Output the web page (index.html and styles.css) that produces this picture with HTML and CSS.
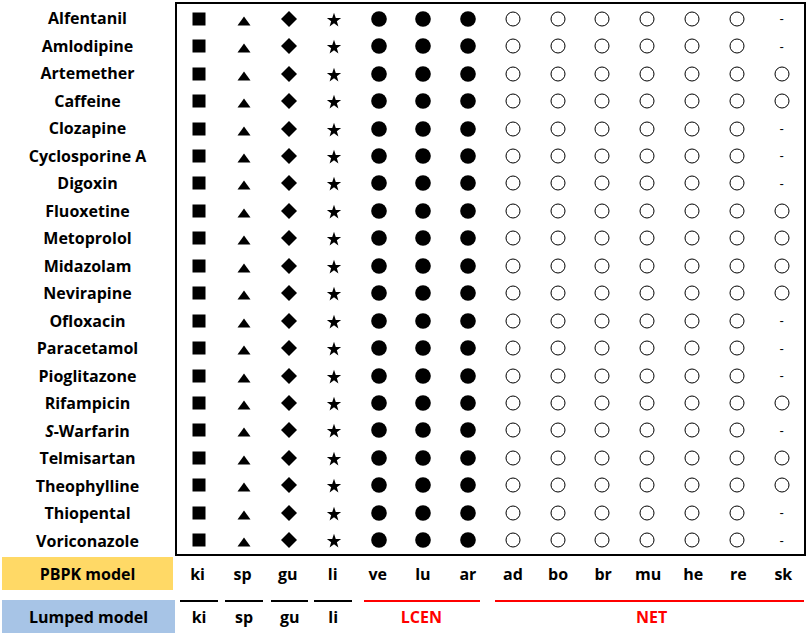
FILE: index.html
```html
<!DOCTYPE html>
<html lang="en">
<head>
    <meta charset="UTF-8">
    <meta name="viewport" content="width=device-width, initial-scale=1.0">
    <link rel="stylesheet" href="styles.css">

    <title>PBPK vs Lumped model</title>
</head>
<body>
    <div class="figure">
        <div class="chart">
            <div class="names" id="names"></div>
            <div class="box" id="box"></div>
        </div>

        <div class="legend pbpk">
            <div class="tag yellow">PBPK model</div>
            <div class="lbl">ki</div>
            <div class="lbl">sp</div>
            <div class="lbl">gu</div>
            <div class="lbl">li</div>
            <div class="lbl">ve</div>
            <div class="lbl">lu</div>
            <div class="lbl">ar</div>
            <div class="lbl">ad</div>
            <div class="lbl">bo</div>
            <div class="lbl">br</div>
            <div class="lbl">mu</div>
            <div class="lbl">he</div>
            <div class="lbl">re</div>
            <div class="lbl">sk</div>
        </div>

        <div class="legend lumped">
            <div class="tag blue">Lumped model</div>
            <div class="group g-ki">ki</div>
            <div class="group g-sp">sp</div>
            <div class="group g-gu">gu</div>
            <div class="group g-li">li</div>
            <div class="group red g-lcen">LCEN</div>
            <div class="group red g-net">NET</div>
        </div>
    </div>

    <script>
        const drugs = [
            ['Alfentanil', 0], ['Amlodipine', 0], ['Artemether', 1], ['Caffeine', 1],
            ['Clozapine', 0], ['Cyclosporine A', 0], ['Digoxin', 0], ['Fluoxetine', 1],
            ['Metoprolol', 1], ['Midazolam', 1], ['Nevirapine', 1], ['Ofloxacin', 0],
            ['Paracetamol', 0], ['Pioglitazone', 0], ['Rifampicin', 1], ['<i>S</i>-Warfarin', 0],
            ['Telmisartan', 1], ['Theophylline', 1], ['Thiopental', 0], ['Voriconazole', 0]
        ];

        const shapes = {
            square: '<rect x="1.5" y="1.5" width="13" height="13"/>',
            triangle: '<polygon points="1.5,14.5 14.5,14.5 8,5.5"/>',
            diamond: '<polygon points="8,0 16,8 8,16 0,8"/>',
            star: '<polygon points="8,1.8 9.76,7 15.13,7.1 10.85,10.3 12.41,15.4 8,12.3 3.59,15.4 5.15,10.3 0.87,7.1 6.24,7"/>',
            dot: '<circle cx="8" cy="8" r="7.8"/>',
            ring: '<circle cx="8" cy="8" r="7" fill="none" stroke="#000" stroke-width="1"/>'
        };

        function icon(name) {
            return '<svg width="16" height="16" viewBox="0 0 16 16">' + shapes[name] + '</svg>';
        }

        const row = ['square', 'triangle', 'diamond', 'star', 'dot', 'dot', 'dot',
                     'ring', 'ring', 'ring', 'ring', 'ring', 'ring'];

        let names = '';
        let cells = '';
        drugs.forEach(function (d) {
            names += '<div class="name">' + d[0] + '</div>';
            row.forEach(function (s) {
                cells += '<div class="cell">' + icon(s) + '</div>';
            });
            cells += d[1] ? '<div class="cell">' + icon('ring') + '</div>' : '<div class="cell dash">-</div>';
        });

        document.getElementById('names').innerHTML = names;
        document.getElementById('box').innerHTML = cells;
    </script>
</body>
</html>
```

FILE: styles.css
```css
body {
    margin: 0;
    padding: 0;
    background-color: white;
    color: black;
    font-family: "Open Sans", Arial, sans-serif;
    font-weight: bold;
}

.figure {
    width: 809px;
    height: 634px;
    padding-top: 2px;
    box-sizing: border-box;
}

.chart {
    display: flex;
}

.names {
    width: 175px;
    padding-top: 3px;
}

.name {
    height: 27.5px;
    line-height: 27.5px;
    text-align: center;
    font-size: 16px;
}

.box {
    width: 631px;
    height: 554px;
    box-sizing: border-box;
    border: 2px solid black;
    padding-top: 1px;
    display: grid;
    grid-template-columns: repeat(14, 1fr);
    grid-template-rows: repeat(20, 1fr);
}

.cell {
    display: flex;
    align-items: center;
    justify-content: center;
}

.cell svg {
    display: block;
}

.dash {
    font-weight: normal;
    font-size: 13px;
    font-family: "Liberation Sans", Arial, sans-serif;
}

.legend {
    display: grid;
    grid-template-columns: 175px repeat(14, 45.07px);
}

.pbpk {
    height: 33px;
    margin-top: 1px;
}

.lumped {
    height: 33px;
    margin-top: 10px;
}

.tag {
    display: flex;
    align-items: center;
    justify-content: center;
    font-size: 16px;
    margin-left: 2px;
}

.yellow {
    background-color: #ffd966;
    margin-right: 2px;
}

.blue {
    background-color: #a7c4e6;
}

.lbl {
    display: flex;
    align-items: center;
    justify-content: center;
    font-size: 16px;
}

.group {
    border-top: 2px solid black;
    text-align: center;
    font-size: 16px;
    line-height: 31px;
    margin: 0 3px;
}

.g-ki { grid-column: 2; margin-left: 5px; margin-right: 2px; }
.g-sp { grid-column: 3; margin-left: 5px; margin-right: 2px; }
.g-gu { grid-column: 4; margin-left: 6px; margin-right: 2px; }
.g-li { grid-column: 5; margin-left: 4px; margin-right: 3px; }

.red {
    color: #ff0000;
    border-top-color: #ff0000;
}

.g-lcen {
    grid-column: 6 / span 3;
    margin-left: 9px;
    margin-right: 10px;
    text-indent: -2px;
}

.g-net {
    grid-column: 9 / span 7;
    margin-left: 5px;
    margin-right: 2px;
    text-indent: 4px;
}
```
